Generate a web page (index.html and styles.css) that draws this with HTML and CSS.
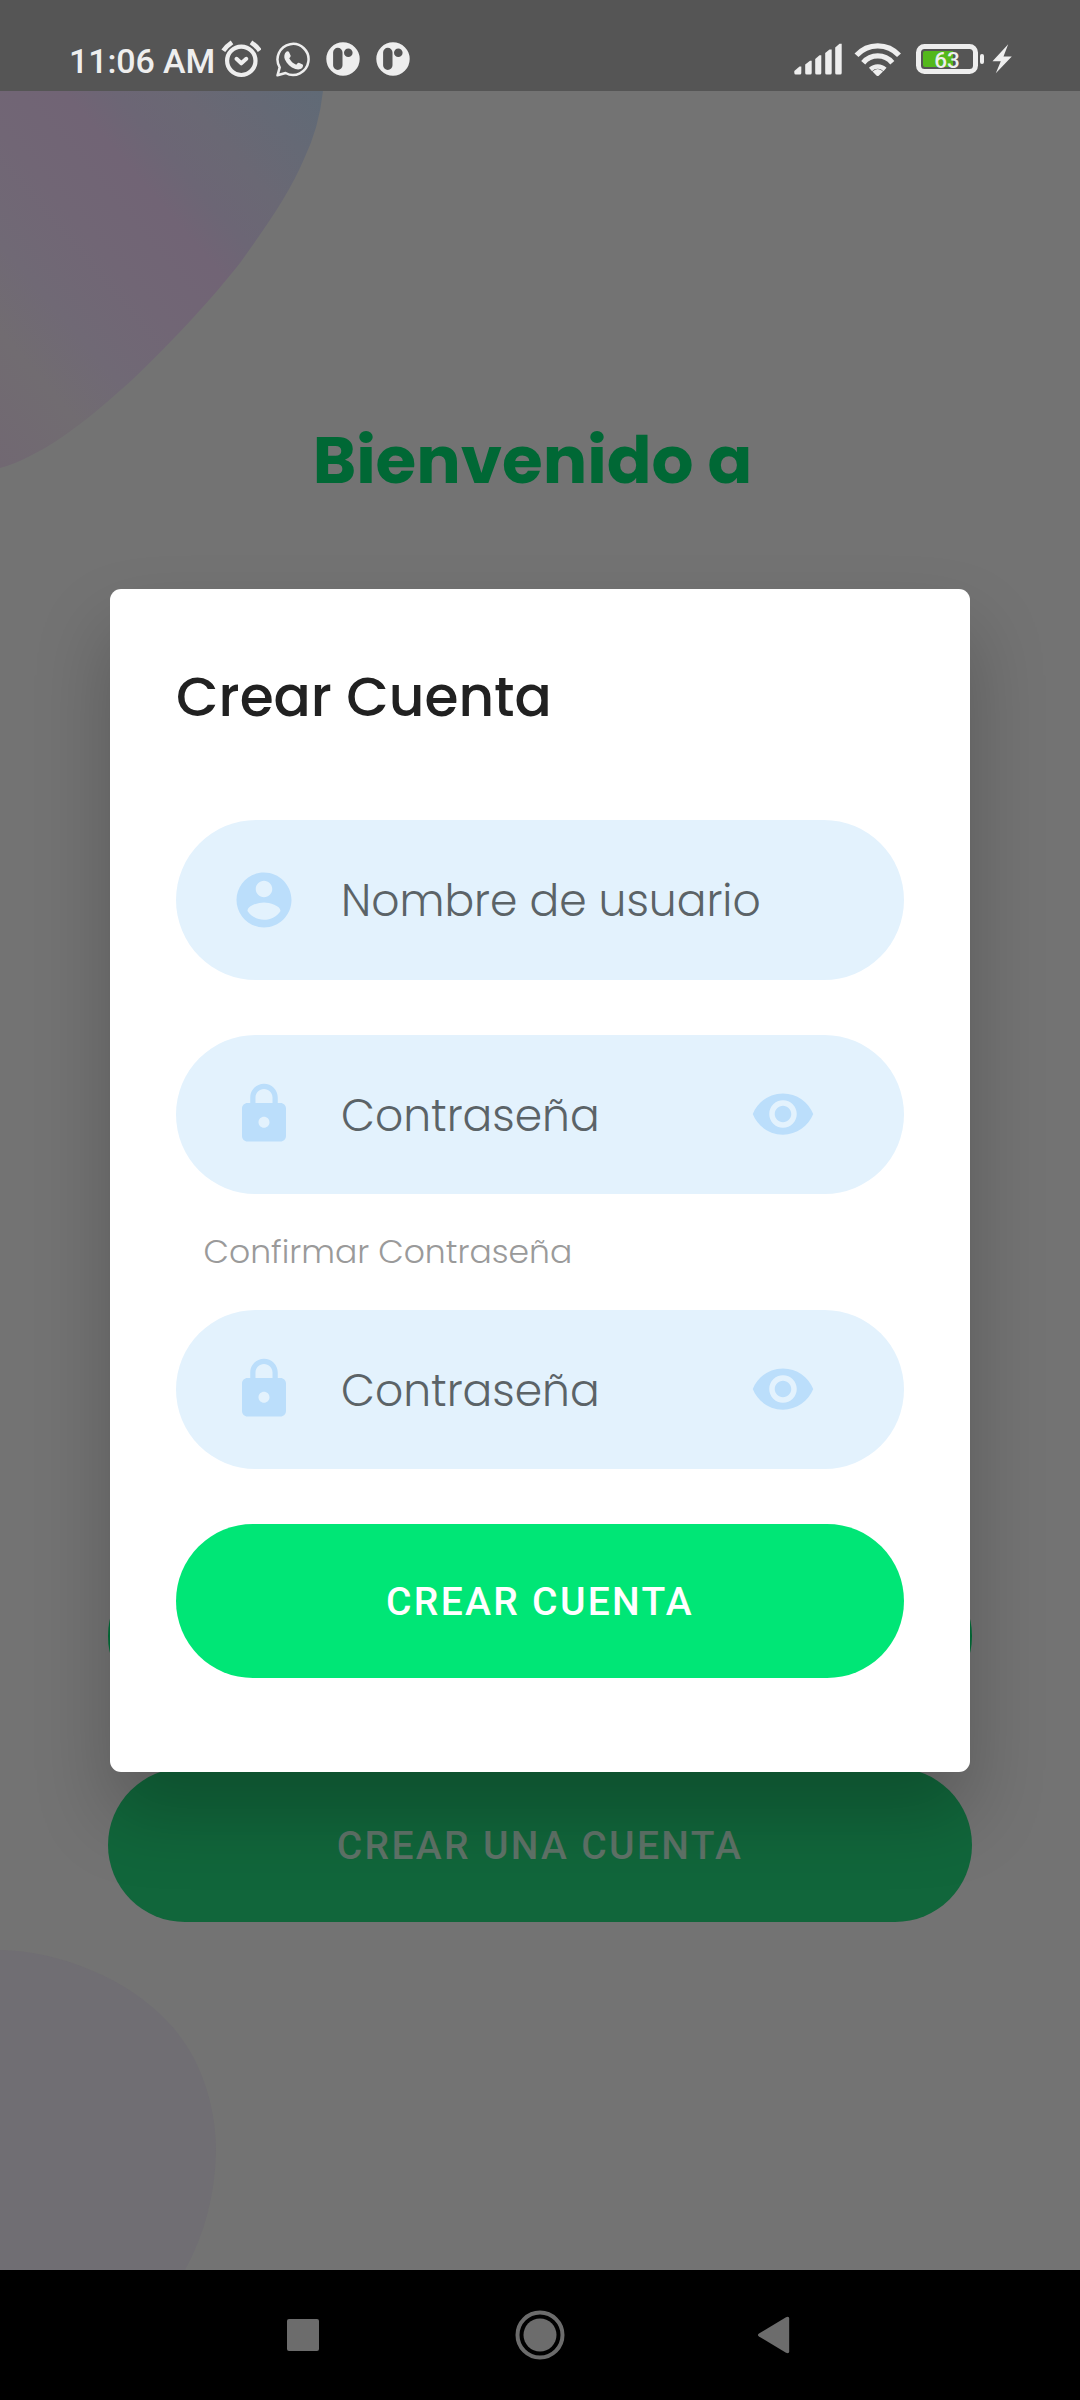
FILE: index.html
```html
<!DOCTYPE html>
<html lang="es">
<head>
<meta charset="utf-8">
<title>Crear Cuenta</title>
<link rel="stylesheet" href="styles.css">
</head>
<body>
<svg class="sprite" aria-hidden="true">
  <symbol id="lock" viewBox="0 0 24 24"><path d="M18 8h-1V6c0-2.760-2.240-5-5-5S7 3.240 7 6v2H6c-1.100 0-2 .9-2 2v10c0 1.100.9 2 2 2h12c1.100 0 2-.9 2-2V10c0-1.100-.9-2-2-2zm-6 9c-1.100 0-2-.9-2-2s.9-2 2-2 2 .9 2 2-.9 2-2 2zm3.100-9H8.900V6c0-1.710 1.390-3.100 3.100-3.100s3.100 1.390 3.100 3.100v2z"/></symbol>
  <symbol id="eye" viewBox="0 0 24 24"><path d="M12 4.500C7 4.500 2.730 7.610 1 12c1.730 4.390 6 7.500 11 7.500s9.270-3.110 11-7.500c-1.730-4.390-6-7.500-11-7.500zM12 17c-2.760 0-5-2.240-5-5s2.240-5 5-5 5 2.240 5 5-2.240 5-5 5zm0-8c-1.660 0-3 1.340-3 3s1.340 3 3 3 3-1.340 3-3-1.340-3-3-3z"/></symbol>
  <symbol id="account" viewBox="0 0 24 24"><path d="M12 2C6.480 2 2 6.480 2 12s4.480 10 10 10 10-4.480 10-10S17.520 2 12 2zm0 3c1.660 0 3 1.340 3 3s-1.340 3-3 3-3-1.340-3-3 1.340-3 3-3zm0 14.200c-2.500 0-4.710-1.280-6-3.220.03-1.990 4-3.080 6-3.080 1.990 0 5.970 1.090 6 3.080-1.290 1.940-3.500 3.220-6 3.220z"/></symbol>
  <symbol id="parking" viewBox="0 0 34 34"><path fill-rule="evenodd" d="M17 .3a16.700 16.700 0 1 1 0 33.400a16.700 16.700 0 1 1 0-33.400zM11.800 5.800a4.700 4.700 0 0 0-4.700 4.700v12.800a4.700 4.700 0 0 0 9.400 0V10.500a4.700 4.700 0 0 0-4.700-4.700zM22.300 6.500a4.300 4.300 0 1 0 0 8.600a4.300 4.300 0 1 0 0-8.600z"/></symbol>
</svg>

<header class="statusbar">
  <div class="statusbar-left">
    <span class="clock">11:06 AM</span>
    <svg class="alarm" width="40" height="40" viewBox="221 40 40 40" fill="none" stroke="#eee" stroke-linecap="round">
      <circle cx="241.300" cy="60.800" r="14.200" stroke-width="4.200"/>
      <path stroke-width="4" stroke-linejoin="round" d="M236.500 58.800L241.300 63.300L246.300 58.800"/>
      <path stroke-width="4.600" stroke-linecap="butt" d="M223.300 50.700Q226.500 46 232 42.300M251 42.300Q256.500 46 259.700 50.700"/>
    </svg>
    <svg class="whatsapp" width="36" height="36" viewBox="275 41 36 36">
      <path fill="none" stroke="#eee" stroke-width="2.500" stroke-linejoin="round" d="M277.500 75.300L279.700 67.300A15.500 15.500 0 1 1 285.600 73z"/>
      <path fill="#eee" d="M286.200 51.800c.8-.9 2.300-.9 2.800.1l1.600 3.500c.3.800-.2 1.500-1.400 2.900 1.600 3 3.900 5.200 7 6.500 1.200-1.500 1.900-2.300 2.700-2l3.700 1.800c.8.500.5 2.200-.3 3.200-1.700 1.900-4.300 2-7 1.200-4.800-1.600-8.400-5.400-10.500-9.800-1-2.600-.5-5.500 1.400-7.400z"/>
    </svg>
    <svg class="parking" width="34" height="34"><use href="#parking"/></svg>
    <svg class="parking" width="34" height="34"><use href="#parking"/></svg>
  </div>
  <div class="statusbar-right">
    <svg width="48" height="32" viewBox="794 43.500 48 32" fill="#eee">
      <path d="M794.300 71.500L799.500 67H801.300V73.500Q801.300 75 799.800 75H795.800Q794.300 75 794.300 73.500z"/>
      <path d="M805.200 65L810 61.300H811.700V73.500Q811.700 75 810.200 75H806.700Q805.200 75 805.200 73.500z"/>
      <path d="M815.200 59.500L819.500 55.700H821.300V73.500Q821.300 75 819.800 75H816.700Q815.200 75 815.200 73.500z"/>
      <path d="M825.200 53.500L829.500 50H831.700V73.500Q831.700 75 830.200 75H826.700Q825.200 75 825.200 73.500z"/>
      <path d="M835.200 48L839.500 44.300H841.700V73.500Q841.700 75 840.200 75H836.700Q835.200 75 835.200 73.500z"/>
    </svg>
    <svg width="48" height="36" viewBox="854 41 48 36" fill="none" stroke="#eee" stroke-width="5.300">
      <path d="M856.500 55.300A28.500 28.500 0 0 1 899 55.300"/>
      <path d="M863.200 62.700A19 19 0 0 1 892.300 62.700"/>
      <path d="M870.500 69.500A10.500 10.500 0 0 1 885 69.500" stroke-width="4.500"/>
      <path fill="#eee" stroke="none" d="M872.500 71.500Q877.700 66.500 883 71.500L878.700 75.700Q877.700 76.500 876.700 75.700z"/>
    </svg>
    <svg class="battery" width="70" height="32" viewBox="915 43 70 32">
      <rect x="918.500" y="46.500" width="57" height="25" rx="6" fill="none" stroke="#eee" stroke-width="5"/>
      <path fill="#54b81c" d="M925 51H953V67H925Q923 67 923 65V53Q923 51 925 51z"/>
      <rect x="980" y="54" width="4" height="10" rx="2" fill="#eee"/>
      <text class="battery-level" x="947" y="68" text-anchor="middle">63</text>
    </svg>
    <svg class="bolt" width="20" height="30" viewBox="991.500 44.500 20 30"><path fill="#eee" d="M1007.700 44.700L992 61.700H1000.300L995.300 73.700L1011.300 57H1003z"/></svg>
  </div>
</header>

<main class="screen">
  <svg class="blobs" width="1080" height="2179" viewBox="0 91 1080 2179" aria-hidden="true">
    <defs>
      <linearGradient id="petal" gradientUnits="userSpaceOnUse" x1="-231" y1="198" x2="140" y2="-120">
        <stop offset="0" stop-color="#716872"/>
        <stop offset=".18" stop-color="#716c71"/>
        <stop offset=".3" stop-color="#706975"/>
        <stop offset=".45" stop-color="#716675"/>
        <stop offset=".6" stop-color="#716475"/>
        <stop offset=".68" stop-color="#6c6675"/>
        <stop offset=".78" stop-color="#6a6874"/>
        <stop offset="1" stop-color="#606a76"/>
      </linearGradient>
    </defs>
    <path fill="url(#petal)" d="M0 91H323Q319 128 304 159C290 193 263 231 240 263C214 296 180 334 133 379C98 411 63 440 30 456Q15 464 0 468z"/>
    <path fill="#706e73" d="M0 1950C60 1951 128 1979 167 2021C202 2057 216 2108 216 2150Q215 2215 185 2270H0z"/>
  </svg>
  <h1 class="welcome">Bienvenido a</h1>
  <div class="actions">
    <button class="pill pill-login" type="button"></button>
    <button class="pill pill-register" type="button">CREAR UNA CUENTA</button>
  </div>

  <div class="overlay">
    <section class="dialog">
      <h2 class="dialog-title">Crear Cuenta</h2>
      <div class="field">
        <svg class="icon"><use href="#account"/></svg>
        <span class="hint">Nombre de usuario</span>
      </div>
      <div class="field field-password">
        <svg class="icon"><use href="#lock"/></svg>
        <span class="hint">Contraseña</span>
        <svg class="icon"><use href="#eye"/></svg>
      </div>
      <div class="confirm-label">Confirmar Contraseña</div>
      <div class="field">
        <svg class="icon"><use href="#lock"/></svg>
        <span class="hint">Contraseña</span>
        <svg class="icon"><use href="#eye"/></svg>
      </div>
      <button class="pill pill-submit" type="button">CREAR CUENTA</button>
    </section>
  </div>
</main>

<nav class="navbar">
  <svg width="36" height="40" viewBox="285 2315 36 40" fill="#6c6c6c"><rect x="287" y="2319" width="32" height="32" rx="2"/></svg>
  <svg class="nav-home" width="52" height="52" viewBox="514.400 2309.300 52 52" fill="#6c6c6c"><circle cx="540.400" cy="2335.300" r="16.500"/><circle cx="540.400" cy="2335.300" r="22.500" fill="none" stroke="#6c6c6c" stroke-width="4"/></svg>
  <svg width="36" height="40" viewBox="755 2315.500 36 40" fill="#6c6c6c"><path d="M759 2334L786 2317.700Q789.200 2316.300 789.200 2319V2352Q789.200 2354.700 786 2353.300L759 2337Q756.800 2335.500 759 2334z"/></svg>
</nav>
</body>
</html>
```
FILE: styles.css
```css
* { box-sizing: border-box; }

body {
  margin: 0;
  width: 1080px;
  height: 2400px;
  display: flex;
  flex-direction: column;
  overflow: hidden;
  background: #737373;
  font-family: Poppins, Inter, sans-serif;
}

svg { display: block; flex: none; }
.sprite { position: absolute; width: 0; height: 0; }

/* Status bar */
.statusbar {
  height: 91px;
  flex: none;
  display: flex;
  justify-content: space-between;
  padding: 0 68.500px 0 69px;
  background: #555;
  color: #eee;
  fill: #eee;
}
.statusbar-left,
.statusbar-right {
  display: flex;
  align-items: center;
  height: 118px;
}
.clock {
  width: 152px;
  padding-top: 3px;
  font: 500 34px/40px Roboto, sans-serif;
  letter-spacing: -.1px;
  white-space: nowrap;
}
.alarm { margin: 2px 14px 0 0; }
.whatsapp { margin-right: 15px; }
.parking + .parking { margin-left: 16px; }
.statusbar-right { gap: 12px; }
.battery { margin-left: 1px; }
.bolt { margin-left: -5.500px; }
.battery-level { font: 500 22.500px Roboto, sans-serif; fill: #eee; }

/* Welcome screen behind the dialog */
.screen {
  position: relative;
  height: 2179px;
  flex: none;
  display: flex;
  flex-direction: column;
  align-items: center;
  padding-top: 321px;
}
.blobs { position: absolute; left: 0; top: 0; }
.welcome {
  position: relative;
  margin: 0;
  padding-right: 15px;
  font-size: 66px;
  line-height: 96px;
  font-weight: 700;
  color: #006835;
}
.actions {
  position: relative;
  margin-top: 1051px;
  display: flex;
  flex-direction: column;
  gap: 55px;
}

.pill {
  height: 154px;
  border: 0;
  border-radius: 77px;
  padding: 2px 0 0;
  font: 500 39px Roboto, sans-serif;
  letter-spacing: 2.330px;
}
.pill-login,
.pill-register { width: 864px; }
.pill-login { background: #006f38; }
.pill-register {
  background: #11663b;
  color: #5f7368;
}
.pill-submit {
  width: 100%;
  margin-top: 55px;
  background: #00e676;
  color: #fff;
}

/* Dialog */
.overlay {
  position: absolute;
  inset: 0;
  display: grid;
  place-items: center;
}
.dialog {
  width: 860px;
  height: 1182.500px;
  padding: 66px 66px 0;
  border-radius: 11px;
  background: #fff;
  box-shadow: 0 42px 76px rgba(0, 0, 0, .22);
}
.dialog-title {
  margin: 0 0 123px;
  font-size: 55px;
  line-height: 84px;
  height: 42px;
  font-weight: 500;
  color: #212121;
}
.field {
  display: flex;
  align-items: center;
  height: 159.300px;
  padding: 0 88px 0 55px;
  border-radius: 80px;
  background: #e3f2fd;
}
.field-password { margin-top: 55px; }
.icon {
  width: 66px;
  height: 66px;
  fill: #bbdefb;
}
.hint {
  flex: 1;
  margin-left: 44px;
  padding-top: 2px;
  font-size: 44px;
  font-weight: 300;
  color: #5b6367;
}
.confirm-label {
  height: 115.700px;
  padding-left: 27.500px;
  line-height: 115px;
  font-size: 33px;
  font-weight: 300;
  color: #9a9a9a;
}

/* System navigation */
.navbar {
  flex: 1;
  display: flex;
  align-items: center;
  padding-left: 285px;
  background: #000;
}
.nav-home { margin: 0 188.600px 0 193.400px; }
```
